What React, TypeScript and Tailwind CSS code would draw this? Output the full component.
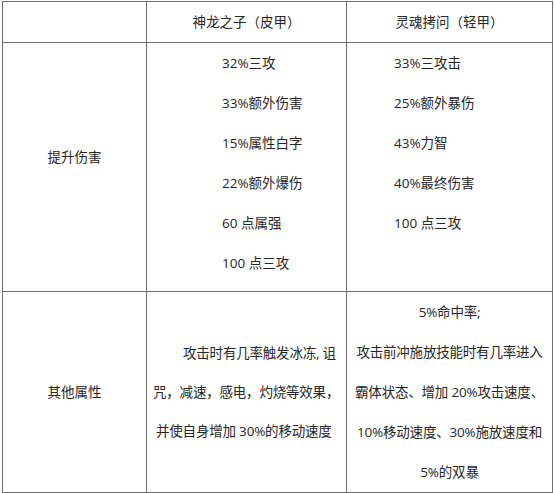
import React from "react";

const cell = "border border-[#6f6f6f] align-middle p-0";

const leftList = ["32%三攻", "33%额外伤害", "15%属性白字", "22%额外爆伤", "60 点属强", "100 点三攻"];
const rightList = ["33%三攻击", "25%额外暴伤", "43%力智", "40%最终伤害", "100 点三攻"];

export default function App() {
  return (
    <div
      className="bg-white w-[554px] h-[493px] pl-[2px] pt-[1px] text-[13.5px] text-[#262626]"
      style={{ fontFamily: '"Open Sans", "Noto Sans CJK SC", sans-serif' }}
    >
      <table className="table-fixed border-collapse w-[550px]">
        <colgroup>
          <col className="w-[144px]" />
          <col className="w-[200px]" />
          <col className="w-[206px]" />
        </colgroup>
        <tbody>
          <tr className="h-[41px]">
            <td className={cell}></td>
            <td className={`${cell} text-center`}>神龙之子（皮甲）</td>
            <td className={`${cell} text-center`}>灵魂拷问（轻甲）</td>
          </tr>
          <tr className="h-[248px]">
            <td className={`${cell} text-center`}>
              <div className="pb-5">提升伤害</div>
            </td>
            <td className={`${cell} align-top`}>
              <div className="pl-[75px] pb-2 leading-[40px]">
                {leftList.map((t) => (
                  <div key={t}>{t}</div>
                ))}
              </div>
            </td>
            <td className={`${cell} align-top`}>
              <div className="pl-[47px] leading-[40px]">
                {rightList.map((t) => (
                  <div key={t}>{t}</div>
                ))}
              </div>
            </td>
          </tr>
          <tr className="h-[201px]">
            <td className={`${cell} text-center`}>其他属性</td>
            <td className={cell}>
              <div className="pl-[6px] leading-[39px] whitespace-nowrap tracking-[-0.2px]">
                <div className="pl-[30px]">攻击时有几率触发冰冻, 诅</div>
                <div>咒，减速，感电，灼烧等效果，</div>
                <div className="pl-[3px]">并使自身增加 30%的移动速度</div>
              </div>
            </td>
            <td className={cell}>
              <div className="text-center leading-[40px] whitespace-nowrap tracking-[-0.2px]">
                <div>5%命中率;</div>
                <div>攻击前冲施放技能时有几率进入</div>
                <div>霸体状态、增加 20%攻击速度、</div>
                <div>10%移动速度、30%施放速度和</div>
                <div>5%的双暴</div>
              </div>
            </td>
          </tr>
        </tbody>
      </table>
    </div>
  );
}
